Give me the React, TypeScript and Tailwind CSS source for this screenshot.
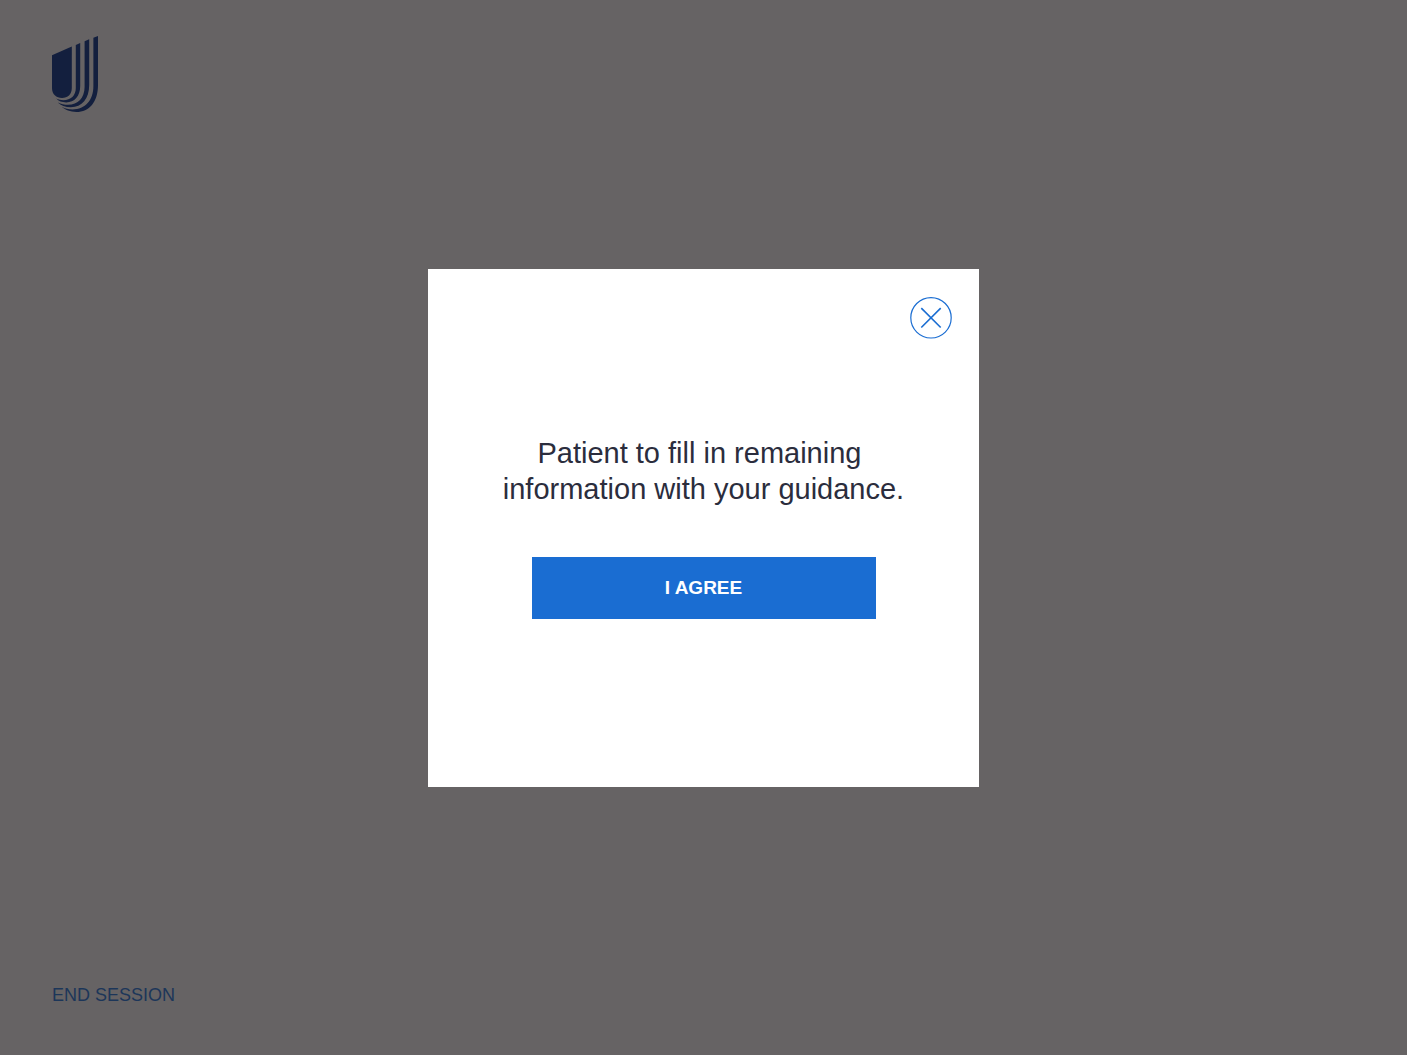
import { useState } from "react";

function Logo() {
  return (
    <svg width="46" height="76" viewBox="0 0 46 76" fill="#131f3e" role="img" aria-label="Logo">
      <path d="M0 19.2 L19.8 10.6 V52 C19.8 58.6 15.6 62 10 62 C4.2 62 0 58.2 0 52 Z" />
      <path d="M23.8 8.9 L28.2 7 V50 C28.2 60.2 22.4 66.4 14.2 66.4 C10 66.4 6.6 65.2 4.2 62.6 C6.6 63.7 8.8 64.2 11.4 64.2 C18.8 64.2 23.8 59.6 23.8 52 Z" />
      <path d="M32.6 5.2 L37.2 3.2 V49 C37.2 62.6 30 71.2 18.8 71.2 C13.4 71.2 8.8 69.4 5.8 66.4 C9 68 12.4 68.8 16 68.8 C26 68.8 32.6 61.8 32.6 51 Z" />
      <path d="M41.4 1.8 L46 0 V49 C46 66 37.2 76 24.4 76 C18.4 76 13 73.6 9.6 70.8 C13 72.6 16.6 73.4 20.6 73.4 C33.2 73.4 41.4 64.4 41.4 50 Z" />
    </svg>
  );
}

function AgreeModal({ onClose }: { onClose: () => void }) {
  return (
    <div className="fixed inset-0 flex items-center justify-center">
      <div
        role="dialog"
        aria-modal="true"
        aria-labelledby="agree-text"
        className="flex w-full max-w-[551px] flex-col items-center bg-white px-[27px] pt-7 pb-[168px]"
      >
        <button type="button" aria-label="Close" onClick={onClose} className="cursor-pointer self-end">
          <svg width="42" height="42" viewBox="0 0 42 42" fill="none" stroke="#1a6dd2">
            <circle cx="21" cy="20.8" r="20.2" strokeWidth="1.2" />
            <path d="M11.3 11.1 L30.7 30.5 M30.7 11.1 L11.3 30.5" strokeWidth="1.6" />
          </svg>
        </button>

        <p id="agree-text" className="mt-24 text-center text-[29px] leading-9 text-[#2b2d3d]">
          Patient to fill in remaining&nbsp;
          <br />
          information with your guidance.
        </p>

        <button
          type="button"
          onClick={onClose}
          className="mt-[50px] h-[62px] w-full max-w-[344px] cursor-pointer bg-[#1a6dd2] pt-0.5 text-[19px] font-bold text-white"
        >
          I AGREE
        </button>
      </div>
    </div>
  );
}

export default function App() {
  const [open, setOpen] = useState<boolean>(true);

  return (
    <div className="flex min-h-screen flex-col justify-between bg-[#666364] px-[52px] pt-9 pb-[47px] font-['Liberation_Sans',Arial,sans-serif]">
      <header>
        <Logo />
      </header>

      <footer>
        <button type="button" onClick={() => setOpen(true)} className="cursor-pointer text-lg leading-6 text-[#1c3659]">
          END SESSION
        </button>
      </footer>

      {open && <AgreeModal onClose={() => setOpen(false)} />}
    </div>
  );
}
